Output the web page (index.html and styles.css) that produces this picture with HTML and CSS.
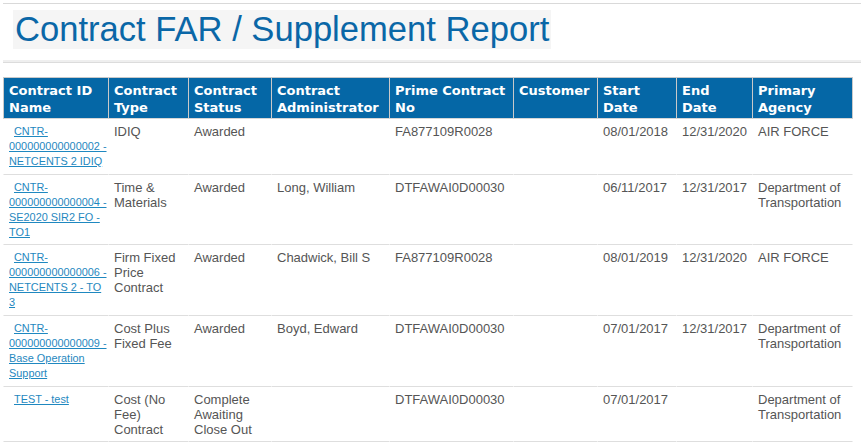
FILE: index.html
```html
<!DOCTYPE html>
<html lang="en">
<head>
<meta charset="utf-8">
<title>Contract FAR / Supplement Report</title>
<link rel="stylesheet" href="styles.css">
</head>
<body>
<div class="page">
  <div class="topline"></div>
  <div class="title-wrap">
    <h1 class="title">Contract FAR / Supplement Report</h1>
  </div>
  <div class="sep"></div>
  <table class="report">
    <thead>
      <tr>
        <th class="c-id">Contract ID Name</th>
        <th class="c-type">Contract Type</th>
        <th class="c-status">Contract Status</th>
        <th class="c-admin">Contract Administrator</th>
        <th class="c-prime">Prime Contract No</th>
        <th class="c-cust">Customer</th>
        <th class="c-start">Start Date</th>
        <th class="c-end">End Date</th>
        <th class="c-agency last">Primary Agency</th>
      </tr>
    </thead>
    <tbody>
      <tr>
        <td class="id"><a href="#">CNTR-000000000000002 - NETCENTS 2 IDIQ</a></td>
        <td>IDIQ</td>
        <td>Awarded</td>
        <td></td>
        <td>FA877109R0028</td>
        <td></td>
        <td>08/01/2018</td>
        <td>12/31/2020</td>
        <td class="last">AIR FORCE</td>
      </tr>
      <tr>
        <td class="id"><a href="#">CNTR-000000000000004 - SE2020 SIR2 FO - TO1</a></td>
        <td>Time &amp; Materials</td>
        <td>Awarded</td>
        <td>Long, William</td>
        <td>DTFAWAI0D00030</td>
        <td></td>
        <td>06/11/2017</td>
        <td>12/31/2017</td>
        <td class="last">Department of Transportation</td>
      </tr>
      <tr>
        <td class="id"><a href="#">CNTR-000000000000006 - NETCENTS 2 - TO 3</a></td>
        <td>Firm Fixed Price Contract</td>
        <td>Awarded</td>
        <td>Chadwick, Bill S</td>
        <td>FA877109R0028</td>
        <td></td>
        <td>08/01/2019</td>
        <td>12/31/2020</td>
        <td class="last">AIR FORCE</td>
      </tr>
      <tr>
        <td class="id"><a href="#">CNTR-000000000000009 - Base Operation Support</a></td>
        <td>Cost Plus Fixed Fee</td>
        <td>Awarded</td>
        <td>Boyd, Edward</td>
        <td>DTFAWAI0D00030</td>
        <td></td>
        <td>07/01/2017</td>
        <td>12/31/2017</td>
        <td class="last">Department of Transportation</td>
      </tr>
      <tr>
        <td class="id"><a href="#">TEST - test</a></td>
        <td>Cost (No Fee) Contract</td>
        <td>Complete Awaiting Close Out</td>
        <td></td>
        <td>DTFAWAI0D00030</td>
        <td></td>
        <td>07/01/2017</td>
        <td></td>
        <td class="last">Department of Transportation</td>
      </tr>
    </tbody>
  </table>
</div>
</body>
</html>
```

FILE: styles.css
```css
html, body {
  margin: 0;
  padding: 0;
  background: #ffffff;
}

body {
  font-family: "Liberation Sans", Arial, sans-serif;
  color: #555555;
}

.page {
  padding: 3px 0 0 3px;
}

.topline {
  border-top: 1px solid #d9d9d9;
}

.title-wrap {
  display: flex;
  padding: 6px 0 0 10px;
}

.title {
  margin: 0;
  padding: 0 2px;
  background: #f5f5f5;
  color: #0a67a7;
  font-family: "Liberation Sans", Arial, sans-serif;
  font-weight: normal;
  font-size: 34.6px;
  line-height: 39px;
  white-space: nowrap;
}

.sep {
  margin-top: 11px;
  height: 2px;
  background: #efefef;
  border-bottom: 1px solid #dcdcdc;
}

.report {
  margin-top: 14px;
  width: 850px;
  table-layout: fixed;
  border-collapse: separate;
  border-spacing: 0;
}

.report th {
  box-sizing: border-box;
  background: #0567a6;
  color: #ffffff;
  font-family: "DejaVu Sans", Verdana, sans-serif;
  font-weight: bold;
  font-size: 13px;
  line-height: 17px;
  text-align: left;
  vertical-align: top;
  padding: 4px 5px 2px 5px;
  border-top: 1px solid #c9c9c9;
  border-left: 1px solid #c9c9c9;
  border-bottom: 1px solid #d6d6d6;
}

.report th.last {
  border-right: 1px solid #c9c9c9;
}

.c-id { width: 105px; }
.c-type { width: 80px; }
.c-status { width: 83px; }
.c-admin { width: 118px; }
.c-prime { width: 124px; }
.c-cust { width: 84px; }
.c-start { width: 79px; }
.c-end { width: 76px; }
.c-agency { width: 101px; }

.report td {
  box-sizing: border-box;
  font-family: "Liberation Sans", Arial, sans-serif;
  font-size: 13px;
  line-height: 15px;
  color: #555555;
  vertical-align: top;
  padding: 5px 5px 4.7px 5px;
  border-left: 1px solid transparent;
  border-bottom: 1px solid #dedede;
}

.report td.last {
  border-right: 1px solid transparent;
}

.report td.id {
  font-size: 10.9px;
  line-height: 15px;
  text-indent: 5px;
  padding-right: 0;
}

.report td.id a {
  color: #1f88c0;
  text-decoration: underline;
}
```
